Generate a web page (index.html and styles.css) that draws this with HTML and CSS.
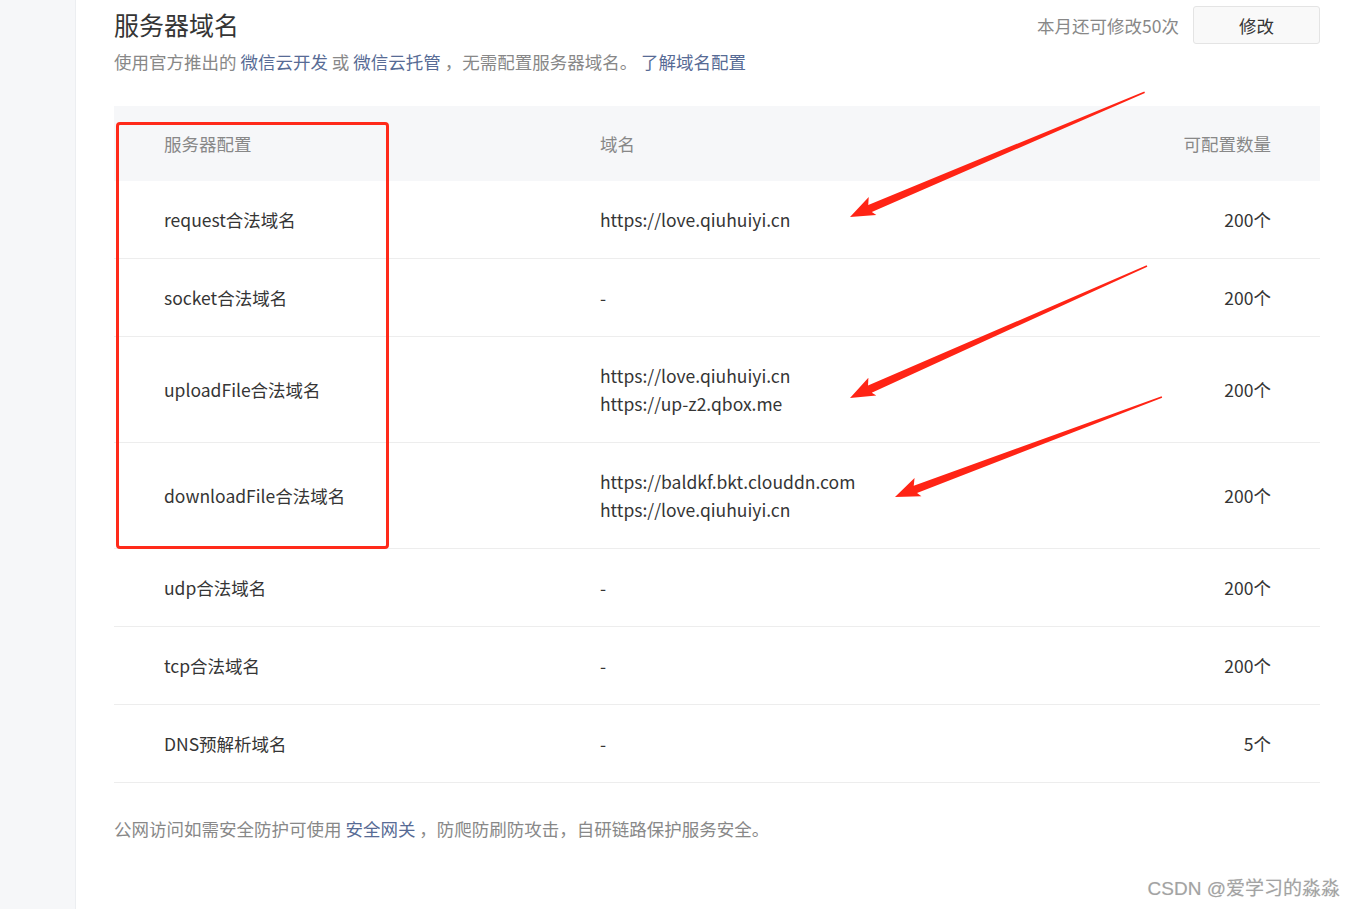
FILE: index.html
```html
<!DOCTYPE html>
<html lang="zh-CN">
<head>
<meta charset="utf-8">
<title>服务器域名</title>
<link rel="stylesheet" href="styles.css">
</head>
<body>
<div class="page">
  <aside class="sidebar"></aside>
  <main class="main">
    <div class="head">
      <div class="head-left">
        <h1 class="title">服务器域名</h1>
        <p class="desc">使用官方推出的 <a class="link">微信云开发</a> 或 <a class="link">微信云托管</a> ，无需配置服务器域名。 <a class="link">了解域名配置</a></p>
      </div>
      <div class="head-right">
        <span class="quota">本月还可修改50次</span>
        <button class="btn">修改</button>
      </div>
    </div>

    <div class="table">
      <div class="row th">
        <div class="c1">服务器配置</div>
        <div class="c2">域名</div>
        <div class="c3">可配置数量</div>
      </div>
      <div class="row">
        <div class="c1">request合法域名</div>
        <div class="c2">https://love.qiuhuiyi.cn</div>
        <div class="c3">200个</div>
      </div>
      <div class="row">
        <div class="c1">socket合法域名</div>
        <div class="c2">-</div>
        <div class="c3">200个</div>
      </div>
      <div class="row tall">
        <div class="c1">uploadFile合法域名</div>
        <div class="c2">https://love.qiuhuiyi.cn<br>https://up-z2.qbox.me</div>
        <div class="c3">200个</div>
      </div>
      <div class="row tall">
        <div class="c1">downloadFile合法域名</div>
        <div class="c2">https://baldkf.bkt.clouddn.com<br>https://love.qiuhuiyi.cn</div>
        <div class="c3">200个</div>
      </div>
      <div class="row">
        <div class="c1">udp合法域名</div>
        <div class="c2">-</div>
        <div class="c3">200个</div>
      </div>
      <div class="row">
        <div class="c1">tcp合法域名</div>
        <div class="c2">-</div>
        <div class="c3">200个</div>
      </div>
      <div class="row">
        <div class="c1">DNS预解析域名</div>
        <div class="c2">-</div>
        <div class="c3">5个</div>
      </div>
    </div>

    <p class="foot">公网访问如需安全防护可使用 <a class="link">安全网关</a> ，防爬防刷防攻击，自研链路保护服务安全。</p>
  </main>
</div>

<div class="redbox"></div>
<svg class="arrows" width="1355" height="909" viewBox="0 0 1355 909">
  <polygon transform="translate(850 217) rotate(-22.96)" points="0,0 25,-11 21.5,-4 320,-0.8 320,0.8 22,4 25,8.5" />
  <polygon transform="translate(850 398) rotate(-23.96)" points="0,0 25,-11 21.5,-4 325,-0.8 325,0.8 22,4 25,8.5" />
  <polygon transform="translate(895 497) rotate(-20.53)" points="0,0 25,-11 21.5,-4 285,-0.8 285,0.8 22,4 25,8.5" />
</svg>
<div class="watermark">CSDN @爱学习的淼淼</div>
</body>
</html>
```

FILE: styles.css
```css
* { box-sizing: border-box; }
html, body {
  margin: 0;
  padding: 0;
  background: #fff;
}
body {
  font-family: "Noto Sans CJK SC", "Noto Sans", sans-serif;
  color: #353535;
  width: 1355px;
  height: 909px;
  overflow: hidden;
  position: relative;
}
.page {
  display: flex;
  height: 909px;
}
.sidebar {
  width: 76px;
  flex: none;
  background: #f6f7f9;
  border-right: 1px solid #eceef1;
}
.main {
  flex: 1;
  padding: 0 35px 0 38px;
}
.head {
  display: flex;
  justify-content: space-between;
  align-items: flex-start;
}
.title {
  margin: 8px 0 0;
  font-size: 25px;
  line-height: 32px;
  font-weight: normal;
  color: #353535;
}
.desc {
  margin: 8px 0 0;
  font-size: 17.5px;
  line-height: 28px;
  color: #888;
}
.link {
  color: #576b95;
  text-decoration: none;
}
.head-right {
  display: flex;
  align-items: center;
  margin-top: 6px;
}
.quota {
  font-size: 17.5px;
  color: #888;
  margin-right: 14px;
}
.btn {
  width: 127px;
  height: 38px;
  border: 1px solid #e4e4e4;
  background: #f9f9f9;
  border-radius: 3px;
  font-family: inherit;
  font-size: 17.5px;
  color: #353535;
  padding: 0;
}
.table {
  margin-top: 30px;
}
.row {
  display: grid;
  grid-template-columns: 486px 1fr 220px;
  align-items: center;
  height: 78px;
  border-bottom: 1px solid #ededed;
  font-size: 17.5px;
  line-height: 28px;
}
.row.tall { height: 106px; }
.row.th {
  height: 75px;
  background: #f6f7f9;
  border-bottom: none;
  color: #888;
}
.c1 { padding-left: 50px; }
.c3 { text-align: right; padding-right: 49px; }
.foot {
  margin: 32px 0 0;
  font-size: 17.5px;
  line-height: 28px;
  color: #888;
}
.redbox {
  position: absolute;
  left: 116px;
  top: 122px;
  width: 273px;
  height: 427px;
  border: 3px solid #ff2a1a;
  border-radius: 4px;
}
.arrows {
  position: absolute;
  left: 0;
  top: 0;
  pointer-events: none;
}
.arrows polygon { fill: #ff2415; }
.watermark {
  position: absolute;
  right: 15px;
  top: 876px;
  font-family: "Liberation Sans", "Noto Sans CJK SC", sans-serif;
  font-size: 19px;
  line-height: 26px;
  color: #a3a3a3;
  text-shadow: 0 0 1px #ddd;
}
```
